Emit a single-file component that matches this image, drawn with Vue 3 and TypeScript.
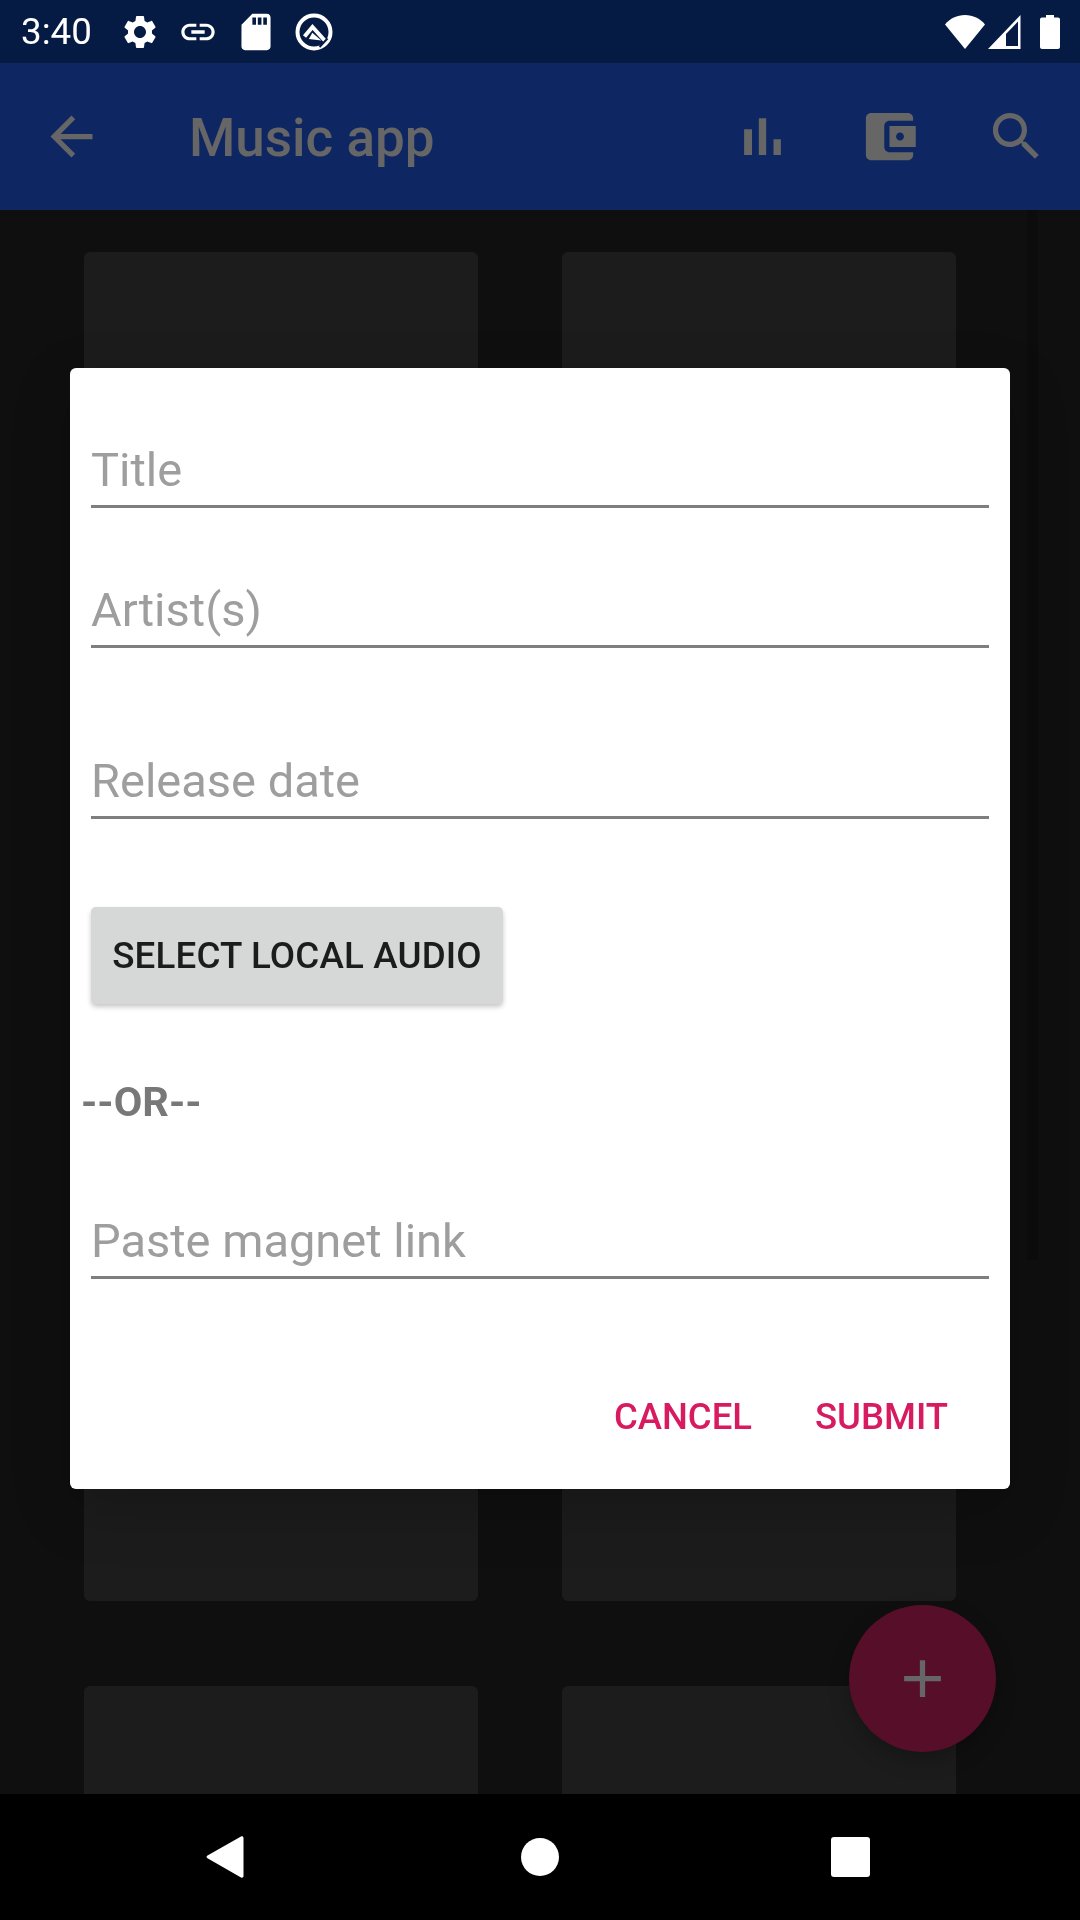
<template>
  <div class="screen">
    <div class="status-bar">
      <span class="clock">3:40</span>
      <div class="status-left">
        <svg class="st-icon" viewBox="0 0 24 24"><path d="M19.14 12.94c.04-.3.06-.61.06-.94 0-.32-.02-.64-.07-.94l2.03-1.58c.18-.14.23-.41.12-.61l-1.92-3.32c-.12-.22-.37-.29-.59-.22l-2.39.96c-.5-.38-1.03-.7-1.62-.94l-.36-2.54c-.04-.24-.24-.41-.48-.41h-3.84c-.24 0-.43.17-.47.41l-.36 2.54c-.59.24-1.13.57-1.62.94l-2.39-.96c-.22-.08-.47 0-.59.22L2.74 8.87c-.12.21-.08.47.12.61l2.03 1.58c-.05.3-.09.63-.09.94s.02.64.07.94l-2.03 1.58c-.18.14-.23.41-.12.61l1.92 3.32c.12.22.37.29.59.22l2.39-.96c.5.38 1.03.7 1.62.94l.36 2.54c.05.24.24.41.48.41h3.84c.24 0 .44-.17.47-.41l.36-2.54c.59-.24 1.13-.56 1.62-.94l2.39.96c.22.08.47 0 .59-.22l1.92-3.32c.12-.22.07-.47-.12-.61l-2.01-1.58zM12 15.6c-1.98 0-3.6-1.62-3.6-3.6s1.62-3.6 3.6-3.6 3.6 1.62 3.6 3.6-1.62 3.6-3.6 3.6z" /></svg>
        <svg class="st-icon" viewBox="0 0 24 24"><path d="M3.9 12c0-1.71 1.39-3.1 3.1-3.1h4V7H7c-2.76 0-5 2.24-5 5s2.24 5 5 5h4v-1.9H7c-1.71 0-3.1-1.39-3.1-3.1zM8 13h8v-2H8v2zm9-6h-4v1.9h4c1.71 0 3.1 1.39 3.1 3.1s-1.39 3.1-3.1 3.1h-4V17h4c2.76 0 5-2.24 5-5s-2.24-5-5-5z" /></svg>
        <svg class="st-icon" viewBox="1 1 22 22"><path d="M18 2h-8L4.02 8 4 20c0 1.1.9 2 2 2h12c1.1 0 2-.9 2-2V4c0-1.1-.9-2-2-2zm-6 6h-2V4h2v4zm3 0h-2V4h2v4zm3 0h-2V4h2v4z" /></svg>
        <svg class="st-icon" viewBox="0 0 40 40">
          <circle cx="20" cy="20" r="16.5" fill="none" stroke="#fff" stroke-width="4" />
          <path d="M10.500 24.500 18.500 15 33 31" fill="none" stroke="#fff" stroke-width="4" />
          <path d="M16 26.500 18.500 22 25 27.500z" fill="#fff" stroke="#fff" stroke-width="1.500" />
          <path d="M25.500 35 33.500 26.500" fill="none" stroke="#051b43" stroke-width="2" />
        </svg>
      </div>
      <div class="status-right">
        <svg class="wifi" viewBox="0 0 40 34"><path d="M0 9.500C5 3.500 12 0 20 0s15 3.500 20 9.500L20 34z" /></svg>
        <svg class="signal" viewBox="0 0 33 34"><path fill-rule="evenodd" d="M32.500 0v34H0zM30 6.500 18 19v12h12z" /></svg>
        <svg class="battery" viewBox="0 0 20 34"><path d="M6 0h8v2.500h4c1.100 0 2 .9 2 2V32c0 1.100-.9 2-2 2H2c-1.100 0-2-.9-2-2V4.500c0-1.100.9-2 2-2h4z" /></svg>
      </div>
    </div>

    <div class="app-bar">
      <svg class="bar-icon" viewBox="0 0 24 24"><path d="M20 11H7.830l5.590-5.590L12 4l-8 8 8 8 1.410-1.410L7.830 13H20v-2z" /></svg>
      <span class="app-title">Music app</span>
      <div class="bar-actions">
        <svg class="bar-icon" viewBox="0 0 24 24"><path d="M5 9.200h3V19H5zM10.600 5h2.800v14h-2.800zm5.600 8H19v6h-2.800z" /></svg>
        <svg class="bar-icon" viewBox="0 0 24 24"><path d="M21 18v1c0 1.100-.9 2-2 2H5c-1.110 0-2-.9-2-2V5c0-1.100.89-2 2-2h14c1.100 0 2 .9 2 2v1h-9c-1.110 0-2 .9-2 2v8c0 1.100.89 2 2 2h9zm-9-2h10V8H12v8zm4-2.500c-.83 0-1.500-.67-1.500-1.500s.67-1.500 1.500-1.500 1.500.67 1.500 1.500-.67 1.500-1.500 1.500z" /></svg>
        <svg class="bar-icon" viewBox="0 0 24 24"><path d="M15.500 14h-.79l-.28-.27C15.410 12.590 16 11.110 16 9.500 16 5.910 13.090 3 9.500 3S3 5.910 3 9.500 5.910 16 9.500 16c1.610 0 3.090-.59 4.230-1.570l.27.28v.79l5 4.990L20.490 19l-4.990-5zm-6 0C7.010 14 5 11.990 5 9.500S7.010 5 9.500 5 14 7.010 14 9.500 11.990 14 9.500 14z" /></svg>
      </div>
    </div>

    <div class="content">
      <div class="grid">
        <div v-for="n in 6" :key="n" class="card"></div>
      </div>
      <div class="scrollbar"></div>
      <button class="fab">
        <svg viewBox="0 0 24 24"><path d="M19 13h-6v6h-2v-6H5v-2h6V5h2v6h6v2z" /></svg>
      </button>
    </div>

    <div class="nav-bar">
      <svg class="nav-back" viewBox="0 0 38 44"><path d="M35 1.500c1.200-.7 2.500.1 2.500 1.400v38.200c0 1.300-1.300 2.100-2.500 1.400L1.500 23.300c-1.200-.7-1.200-2 0-2.700z" /></svg>
      <div class="nav-home"></div>
      <div class="nav-recent"></div>
    </div>

    <div class="modal">
      <div v-for="f in fields" :key="f.label" class="field" :class="f.cls">
        <span>{{ f.label }}</span>
      </div>
      <button class="select-btn">SELECT LOCAL AUDIO</button>
      <div class="or">--OR--</div>
      <div class="field field-magnet"><span>Paste magnet link</span></div>
      <div class="actions">
        <button class="text-btn">CANCEL</button>
        <button class="text-btn">SUBMIT</button>
      </div>
    </div>
  </div>
</template>

<script setup lang="ts">
const fields = [
  { label: 'Title', cls: 'field-title' },
  { label: 'Artist(s)', cls: 'field-artist' },
  { label: 'Release date', cls: 'field-date' },
];
</script>

<style>
html,
body {
  margin: 0;
  background: #000;
}
</style>

<style scoped>
.screen {
  position: relative;
  width: 1080px;
  height: 1920px;
  display: flex;
  flex-direction: column;
  overflow: hidden;
  font-family: Roboto, 'Liberation Sans', sans-serif;
  background: #0f0f0f;
}

.status-bar {
  height: 63px;
  flex: none;
  display: flex;
  align-items: center;
  padding: 0 20px 0 21px;
  background: #051b43;
  color: #fff;
  box-sizing: border-box;
  will-change: transform;
}

.clock {
  font-size: 36.75px;
  width: 99px;
}

.status-left {
  display: flex;
  gap: 18px;
  margin-right: auto;
}

.st-icon {
  width: 40px;
  height: 40px;
  fill: #fff;
}

.status-right {
  display: flex;
  align-items: center;
}

.wifi {
  width: 40px;
  height: 34px;
  fill: #fff;
}

.signal {
  width: 33px;
  height: 34px;
  margin-left: 3px;
  fill: #fff;
}

.battery {
  width: 20px;
  height: 34px;
  margin-left: 19px;
  fill: #fff;
}

.app-bar {
  height: 147px;
  flex: none;
  display: flex;
  align-items: center;
  padding: 0 32px 0 40px;
  background: #0e2763;
}

.bar-icon {
  width: 63px;
  height: 63px;
  fill: #666;
}

.app-title {
  margin-left: 86px;
  padding-top: 3px;
  font-size: 53px;
  font-weight: 500;
  color: #666;
  will-change: transform;
}

.bar-actions {
  display: flex;
  gap: 64px;
  margin-left: auto;
}

.content {
  position: relative;
  flex: 1;
  overflow: hidden;
  padding: 42px 0 0 84px;
}

.grid {
  display: grid;
  grid-template-columns: 394px 394px;
  grid-auto-rows: 632px;
  column-gap: 84px;
  row-gap: 85px;
}

.card {
  background: #1c1c1c;
  border-radius: 6px;
}

.scrollbar {
  position: absolute;
  top: 0;
  left: 1027px;
  width: 11px;
  height: 1050px;
  background: #0c0c0c;
}

.fab {
  position: absolute;
  left: 849px;
  top: 1395px;
  width: 147px;
  height: 147px;
  padding: 42px;
  border: none;
  border-radius: 50%;
  background: #570e28;
  box-shadow: 0 8px 20px rgba(0, 0, 0, 0.25);
}

.fab svg {
  display: block;
  width: 63px;
  height: 63px;
  fill: #666;
}

.nav-bar {
  height: 126px;
  flex: none;
  position: relative;
  display: flex;
  align-items: center;
  background: #000;
}

.nav-back {
  width: 38px;
  height: 44px;
  margin-left: 206px;
  fill: #fff;
}

.nav-home {
  width: 38px;
  height: 38px;
  margin-left: 277px;
  border-radius: 50%;
  background: #fff;
}

.nav-recent {
  width: 39px;
  height: 40px;
  margin-left: 272px;
  border-radius: 3px;
  background: #fff;
}

.modal {
  position: absolute;
  left: 70px;
  top: 368px;
  width: 940px;
  height: 1121px;
  box-sizing: border-box;
  padding: 0 21px;
  background: #fff;
  border-radius: 6px;
  box-shadow: 0 20px 60px rgba(0, 0, 0, 0.2);
  will-change: transform;
}

.field {
  height: 63px;
  box-sizing: border-box;
  border-bottom: 3px solid #7f7f7f;
  font-size: 47px;
  line-height: 50px;
  color: #9e9e9e;
}

.field-title {
  margin-top: 77px;
}

.field-artist {
  margin-top: 77px;
}

.field-date {
  margin-top: 108px;
}

.field-magnet {
  margin-top: 90px;
}

.select-btn {
  display: block;
  width: 412px;
  height: 97px;
  margin-top: 88px;
  padding: 0;
  border: none;
  border-radius: 5px;
  background: #d6d7d7;
  color: #1c1c1c;
  font-family: inherit;
  font-size: 36.750px;
  font-weight: 500;
  letter-spacing: 0.15px;
  box-shadow: 0 3px 5px rgba(0, 0, 0, 0.22);
}

.or {
  margin: 74px 0 0 -10px;
  font-size: 41.500px;
  font-weight: 700;
  line-height: 48px;
  color: #787878;
}

.actions {
  display: flex;
  justify-content: flex-end;
  gap: 63px;
  margin-top: 106px;
  padding-right: 41px;
}

.text-btn {
  height: 63px;
  padding: 0;
  border: none;
  background: none;
  color: #d81b60;
  font-family: inherit;
  font-size: 36.500px;
  font-weight: 500;
}
</style>
